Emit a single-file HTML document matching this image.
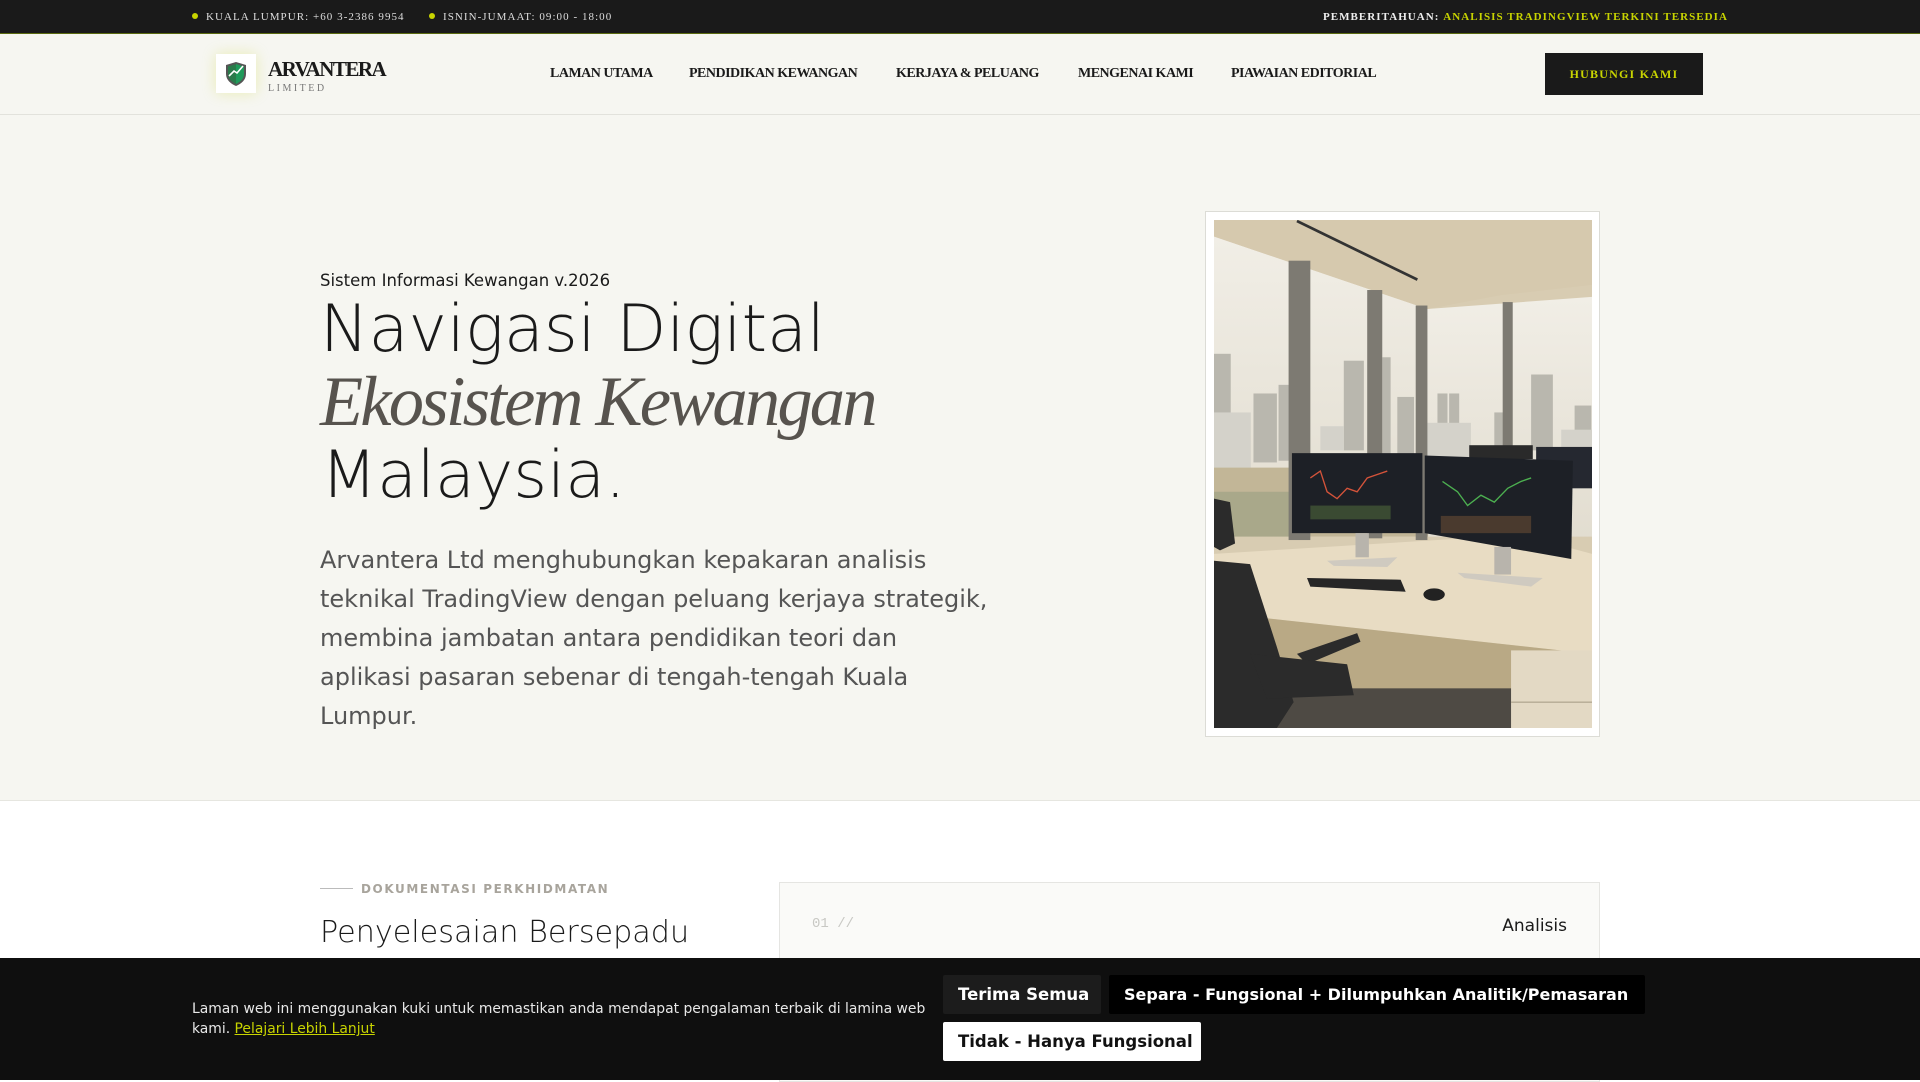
<!DOCTYPE html>
<html><head><meta charset="utf-8"><style>
*{margin:0;padding:0;box-sizing:border-box}
body{width:1920px;height:1080px;overflow:hidden;background:#fff;font-family:"DejaVu Sans","Liberation Sans",sans-serif;position:relative}
.top{position:absolute;left:0;top:0;width:1920px;height:34px;background:#1a1a1a;border-bottom:1px solid #5a6a10;font-family:"Liberation Serif",serif;font-size:11px;letter-spacing:1.05px;color:#ddd}
.top span{position:absolute;top:11px;white-space:nowrap}
.dot{display:inline-block;width:6px;height:6px;border-radius:50%;background:#c8d400;margin-right:8px;vertical-align:1px}
.nav{position:absolute;left:0;top:34px;width:1920px;height:81px;background:#f6f6f1;border-bottom:1px solid #e2e2dc}
.logo{position:absolute;left:216px;top:20px;width:40px;height:39px;background:#fff;box-shadow:0 0 14px rgba(200,212,0,.25)}
.brand{position:absolute;left:268px;top:23px;font-family:"Liberation Serif",serif;font-weight:bold;font-size:21px;letter-spacing:-1.5px;color:#1a1a1a}
.ltd{position:absolute;left:268px;top:49px;font-family:"Liberation Serif",serif;font-size:10px;letter-spacing:2.5px;color:#777}
.nl{position:absolute;top:32px;font-family:"Liberation Serif",serif;font-weight:bold;font-size:14px;letter-spacing:-.5px;color:#1a1a1a;white-space:nowrap}
.btn{position:absolute;left:1545px;top:19px;width:158px;height:42px;background:#1a1a1a;color:#c8d400;font-family:"Liberation Serif",serif;font-weight:bold;font-size:12px;letter-spacing:1.2px;text-align:center;line-height:42px}
.hero{position:absolute;left:0;top:115px;width:1920px;height:686px;background:#f6f6f1;border-bottom:1px solid #e6e6e0}
.kick{position:absolute;left:320px;top:271px;font-size:16.5px;color:#1a1a1a}
.h1{position:absolute;left:320px;top:294px;font-size:65px;font-weight:200;line-height:72px;color:#1a1a1a;white-space:nowrap}
.h1 em{font-family:"Liberation Serif",serif;font-style:italic;font-weight:normal;font-size:70.5px;letter-spacing:-2.8px;color:#57534e}
.p{position:absolute;left:320px;top:541px;width:671px;font-size:24px;line-height:39px;color:#555}
.frame{position:absolute;left:1205px;top:211px;width:395px;height:526px;background:#fff;border:1px solid #dcdcd6;padding:8px}
.sec{position:absolute;left:320px;top:882px;font-size:12px;font-weight:bold;letter-spacing:1.6px;color:#a8a49c}
.sec:before{content:"";display:inline-block;width:33px;height:1px;background:#bbb;vertical-align:4px;margin-right:8px}
.h2{position:absolute;left:320px;top:912px;font-size:30.2px;font-weight:200;color:#1a1a1a;line-height:42px}
.card{position:absolute;left:779px;top:882px;width:821px;height:200px;background:#fafaf8;border:1px solid #e5e5e2}
.num{position:absolute;left:32px;top:33px;font-family:"Liberation Mono",monospace;font-size:14px;color:#c8c8c4}
.an{position:absolute;right:32px;top:33px;font-size:17px;color:#1a1a1a}
.ck{position:absolute;left:0;top:958px;width:1920px;height:122px;background:#0f0f0f}
.ckt{position:absolute;left:192px;top:41px;width:750px;font-size:13.9px;line-height:20px;color:#e8e8e8}
.ckt a{color:#c8d400;text-decoration:underline}
.b{position:absolute;height:39px;line-height:39px;font-size:16.5px;font-weight:bold;padding:0 15px;border-radius:2px;white-space:nowrap;overflow:hidden}
</style></head><body>
<div class="top">
<span style="left:192px"><i class="dot"></i>KUALA LUMPUR: +60 3-2386 9954</span>
<span style="left:429px"><i class="dot"></i>ISNIN-JUMAAT: 09:00 - 18:00</span>
<span style="right:192px;font-weight:bold;color:#eee">PEMBERITAHUAN: <b style="color:#c8d400">ANALISIS TRADINGVIEW TERKINI TERSEDIA</b></span>
</div>
<div class="nav">
<div class="logo"><svg width="40" height="39" viewBox="0 0 40 39"><path d="M20 8 L30 11 V20 C30 26 25 30 20 32 C15 30 10 26 10 20 V11 Z" fill="#555"/><path d="M20 10 L28 12.5 V20 C28 25 24 28 20 30 Z" fill="#1f9a5a"/><path d="M20 10 L12 12.5 V20 C12 25 16 28 20 30 Z" fill="#2a7a4a"/><path d="M13 22 L18 17 L21 19 L27 12" stroke="#fff" stroke-width="1.6" fill="none"/></svg></div>
<div class="brand">ARVANTERA</div>
<div class="ltd">LIMITED</div>
<div class="nl" style="left:550px">LAMAN UTAMA</div>
<div class="nl" style="left:689px">PENDIDIKAN KEWANGAN</div>
<div class="nl" style="left:896px">KERJAYA &amp; PELUANG</div>
<div class="nl" style="left:1078px">MENGENAI KAMI</div>
<div class="nl" style="left:1231px">PIAWAIAN EDITORIAL</div>
<div class="btn">HUBUNGI KAMI</div>
</div>
<div class="hero"></div>
<div class="kick">Sistem Informasi Kewangan v.2026</div>
<div class="h1">Navigasi Digital<br><em>Ekosistem Kewangan</em><br><span style="margin-left:1px">Malaysia.</span></div>
<div class="p">Arvantera Ltd menghubungkan kepakaran analisis teknikal TradingView dengan peluang kerjaya strategik, membina jambatan antara pendidikan teori dan aplikasi pasaran sebenar di tengah-tengah Kuala Lumpur.</div>
<div class="frame"><svg width="378" height="508" viewBox="42 42 1130 1473" preserveAspectRatio="none">
<defs><linearGradient id="sky" x1="0" y1="0" x2="0" y2="1"><stop offset="0" stop-color="#f1eee6"/><stop offset="1" stop-color="#e2ddd0"/></linearGradient></defs>
<rect x="42" y="42" width="1130" height="1473" fill="#d8ccb2"/>
<polygon points="42,90 680,300 680,960 42,960" fill="url(#sky)"/>
<polygon points="680,300 1172,265 1172,960 680,960" fill="url(#sky)"/>
<g fill="#b9b7ae"><rect x="42" y="430" width="50" height="300"/><rect x="160" y="545" width="70" height="200"/><rect x="235" y="520" width="40" height="220"/><rect x="430" y="450" width="60" height="260"/><rect x="545" y="440" width="25" height="280"/><rect x="590" y="555" width="50" height="170"/><rect x="710" y="545" width="30" height="150"/><rect x="745" y="545" width="30" height="150"/><rect x="990" y="490" width="65" height="220"/><rect x="1120" y="580" width="50" height="140"/><rect x="880" y="600" width="40" height="110"/></g>
<g fill="#d4d2ca"><rect x="42" y="600" width="110" height="180"/><rect x="680" y="630" width="130" height="100"/><rect x="1080" y="650" width="92" height="60"/><rect x="360" y="640" width="70" height="70"/></g>
<rect x="42" y="760" width="640" height="200" fill="#c2b697"/><rect x="42" y="830" width="250" height="130" fill="#a9a88a"/>
<polygon points="42,42 1172,42 1172,230 900,260 680,300 42,90" fill="#d6c9ae"/>
<line x1="290" y1="45" x2="650" y2="215" stroke="#333" stroke-width="8"/>
<g fill="#7d7a72"><rect x="265" y="160" width="65" height="810"/><rect x="500" y="245" width="45" height="720"/><rect x="645" y="290" width="35" height="680"/><rect x="905" y="280" width="30" height="690"/></g>
<rect x="805" y="695" width="190" height="40" fill="#2a2a2a"/><rect x="1005" y="700" width="167" height="120" fill="#252830"/>
<polygon points="42,1010 960,955 1172,1010 1172,1300 42,1180" fill="#e8dcc3"/>
<polygon points="42,1180 1172,1300 1172,1330 900,1420 42,1400" fill="#b9a985"/>
<rect x="42" y="1400" width="1130" height="115" fill="#4e4a44"/>
<rect x="930" y="1290" width="242" height="225" fill="#e3d9c4"/><line x1="930" y1="1440" x2="1172" y2="1440" stroke="#b5aa94" stroke-width="4"/>
<rect x="275" y="718" width="390" height="232" fill="#1d2026"/><polyline points="330,790 360,770 380,830 410,850 440,820 470,830 500,790 530,780 560,770" stroke="#d4533a" stroke-width="4" fill="none"/><rect x="330" y="870" width="240" height="40" fill="#3a4a32"/>
<polygon points="672,725 1115,740 1110,1025 672,950" fill="#1d2026"/><polyline points="725,800 770,830 800,870 840,840 880,860 920,820 960,800 990,790" stroke="#4caf50" stroke-width="4" fill="none"/><rect x="720" y="900" width="270" height="50" fill="#4a3a2e"/>
<rect x="465" y="950" width="40" height="70" fill="#b8b4ac"/><polygon points="380,1030 590,1020 560,1048 400,1045" fill="#cfcac0"/>
<rect x="880" y="990" width="50" height="80" fill="#b8b4ac"/><polygon points="770,1065 1025,1080 990,1105 790,1080" fill="#cfcac0"/>
<polygon points="320,1080 600,1085 615,1120 330,1105" fill="#262626"/><ellipse cx="700" cy="1128" rx="32" ry="18" fill="#222"/>
<g fill="#2b2b2b"><polygon points="42,1030 150,1040 230,1280 280,1440 230,1515 42,1515"/><polygon points="42,850 90,860 105,980 60,1000 42,990"/><polygon points="290,1300 470,1240 480,1265 320,1330"/><polygon points="150,1300 440,1330 460,1420 200,1430"/></g>
</svg></div>
<div class="sec">DOKUMENTASI PERKHIDMATAN</div>
<div class="h2">Penyelesaian Bersepadu<br>untuk Pelabur &amp;</div>
<div class="card"><div class="num">01 //</div><div class="an">Analisis</div></div>
<div class="ck">
<div class="ckt">Laman web ini menggunakan kuki untuk memastikan anda mendapat pengalaman terbaik di lamina web kami. <a>Pelajari Lebih Lanjut</a></div>
<div class="b" style="left:943px;top:17px;width:158px;background:#1c1c1c;color:#fff">Terima Semua</div>
<div class="b" style="left:1109px;top:17px;width:536px;background:#000;color:#fff;font-size:16px">Separa - Fungsional + Dilumpuhkan Analitik/Pemasaran</div>
<div class="b" style="left:943px;top:64px;width:258px;background:#fff;color:#111">Tidak - Hanya Fungsional</div>
</div>
</body></html>
